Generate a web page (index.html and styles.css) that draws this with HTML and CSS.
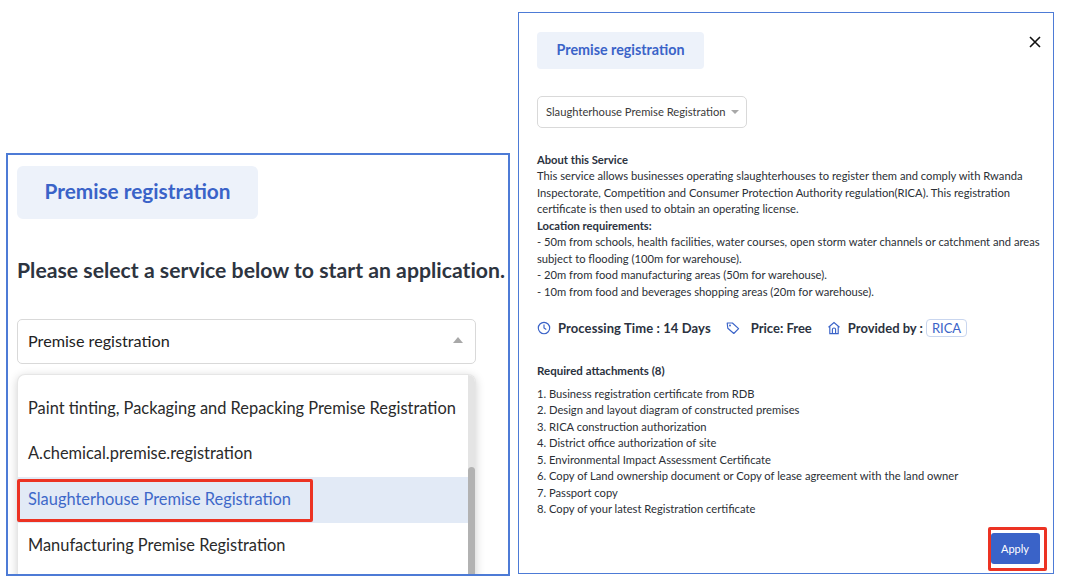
FILE: index.html
```html
<!DOCTYPE html>
<html lang="en">
<head>
<meta charset="utf-8">
<title>Premise registration</title>
<link rel="stylesheet" href="styles.css">
</head>
<body>
<main class="page">
  <section class="panel panel-left">
    <div class="badge badge-lg">Premise registration</div>
    <h2 class="prompt">Please select a service below to start an application.</h2>
    <div class="select select-lg">
      <span>Premise registration</span>
      <span class="caret caret-up"></span>
    </div>
    <div class="dropdown">
      <ul class="options">
        <li class="option">Paint tinting, Packaging and Repacking Premise Registration</li>
        <li class="option">A.chemical.premise.registration</li>
        <li class="option option-active">Slaughterhouse Premise Registration<span class="annot annot-option"></span></li>
        <li class="option">Manufacturing Premise Registration</li>
      </ul>
      <div class="scrollbar"><div class="thumb"></div></div>
    </div>
  </section>

  <section class="panel panel-right">
    <button class="close" aria-label="Close">
      <svg width="12" height="12" viewBox="0 0 12 12"><path d="M1 1l10 10M11 1L1 11" stroke="#111" stroke-width="1.6" fill="none"/></svg>
    </button>
    <div class="badge badge-sm">Premise registration</div>
    <div class="select select-sm">
      <span>Slaughterhouse Premise Registration</span>
      <span class="caret caret-down"></span>
    </div>
    <div class="about">
      <p><b>About this Service</b></p>
      <p>This service allows businesses operating slaughterhouses to register them and comply with Rwanda Inspectorate, Competition and Consumer Protection Authority regulation(RICA). This registration certificate is then used to obtain an operating license.</p>
      <p><b>Location requirements:</b></p>
      <p>- 50m from schools, health facilities, water courses, open storm water channels or catchment and areas subject to flooding (100m for warehouse).</p>
      <p>- 20m from food manufacturing areas (50m for warehouse).</p>
      <p>- 10m from food and beverages shopping areas (20m for warehouse).</p>
    </div>
    <div class="meta">
      <svg class="ico" viewBox="0 0 14 14"><circle cx="7" cy="7" r="5.7"/><path d="M7 3.6V7l2.3 1.4"/></svg>
      <b class="meta-a">Processing Time : 14 Days</b>
      <svg class="ico" viewBox="0 0 14 14"><path d="M1.2 2h5.2l6.2 5.6-4.8 4.9L1.8 7.2z" stroke-linejoin="round"/><circle cx="4" cy="4.4" r=".4"/></svg>
      <b class="meta-b">Price: Free</b>
      <svg class="ico" viewBox="0 0 14 14"><path d="M1.5 6.2L7 1.6l5.5 4.6M2.8 5.4v7.2h8.4V5.4M5.4 12.6V8.6a1.6 1.6 0 0 1 3.2 0v4"/></svg>
      <b class="meta-c">Provided by :</b>
      <span class="tag">RICA</span>
    </div>
    <h3 class="req-title">Required attachments (8)</h3>
    <ol class="req-list">
      <li>1. Business registration certificate from RDB</li>
      <li>2. Design and layout diagram of constructed premises</li>
      <li>3. RICA construction authorization</li>
      <li>4. District office authorization of site</li>
      <li>5. Environmental Impact Assessment Certificate</li>
      <li>6. Copy of Land ownership document or Copy of lease agreement with the land owner</li>
      <li>7. Passport copy</li>
      <li>8. Copy of your latest Registration certificate</li>
    </ol>
    <div class="actions">
      <button class="apply">Apply</button>
      <span class="annot annot-apply"></span>
    </div>
  </section>
</main>
</body>
</html>
```

FILE: styles.css
```css
* { box-sizing: border-box; }
html, body { margin: 0; padding: 0; background: #fff; }
body { width: 1068px; height: 586px; overflow: hidden; font-family: Lato, "Noto Sans", sans-serif; color: #2b3240; }
.page { display: flex; align-items: flex-start; padding: 12px 0 0 6px; gap: 8px; }
.panel { background: #fff; position: relative; }
.panel-left { width: 504px; height: 423px; margin-top: 141px; border: 2px solid #4d7bd6; padding: 11px 0 0 9px; overflow: hidden; }
.panel-right { width: 536px; height: 562px; border: 1px solid #4d7bd6; padding: 19px 12px 0 18px; }
.badge { background: #edf2fa; color: #3a63c8; font-weight: 700; border-radius: 6px; display: flex; align-items: center; justify-content: center; }
.badge-lg { width: 241px; height: 53px; padding-bottom: 5px; font-size: 20.8px; }
.badge-sm { width: 167px; height: 37px; padding-bottom: 3px; font-size: 14.3px; border-radius: 4px; }
.prompt { margin: 38px 0 0; font-size: 21.2px; line-height: 27px; font-weight: 700; white-space: nowrap; color: #2d3440; letter-spacing: 0.02px; }
.select { display: flex; align-items: center; justify-content: space-between; background: #fff; border: 1px solid #d9d9d9; border-radius: 5px; color: #222; white-space: nowrap; }
.select-lg { width: 459px; height: 45px; margin-top: 35px; padding: 0 12px 3px 10px; font-size: 16.2px; }
.select-sm { width: 210px; height: 32px; margin-top: 27px; padding: 0 7px 1px 8px; font-size: 11.2px; color: #3a3a3a; }
.caret { width: 0; height: 0; border-left: 5.5px solid transparent; border-right: 5.5px solid transparent; }
.caret-up { border-bottom: 6px solid #a8a8a8; }
.caret-down { border-left-width: 4px; border-right-width: 4px; border-top: 4px solid #a8a8a8; }
.dropdown { width: 459px; height: 240px; margin-top: 10px; position: relative; background: #fff; border: 1px solid #e6e6e6; border-bottom: 0; border-radius: 8px 8px 0 0; box-shadow: 0 2px 10px rgba(0,0,0,.18); padding-top: 11px; }
.options { list-style: none; margin: 0; padding: 0; width: 451px; }
.option { position: relative; height: 45.6px; display: flex; align-items: center; padding: 0 0 3px 10px; font-size: 16.4px; color: #2a2a2a; white-space: nowrap; }
.option-active { background: #e2eaf6; color: #3e68c9; }
.scrollbar { position: absolute; top: 0; right: 0; bottom: 0; width: 7px; background: #e4e4e4; border-radius: 0 8px 0 0; }
.thumb { position: absolute; top: 92px; left: 0; right: 0; bottom: 0; background: #b2b2b2; border-radius: 4px 4px 0 0; }
.annot { position: absolute; border: 3px solid #ec3323; border-radius: 2px; pointer-events: none; }
.annot-option { left: -1px; top: 2px; width: 296px; height: 43px; }
.annot-apply { left: -3px; top: -6px; width: 59px; height: 44px; }
.close { position: absolute; top: 23px; right: 12px; padding: 0; width: 12px; height: 12px; border: 0; background: none; display: flex; }
.about { margin-top: 24px; font-size: 11.2px; line-height: 16.45px; color: #2b2f36; }
.about p { margin: 0; }
.about b { color: #2b3240; }
.meta { display: flex; align-items: center; margin-top: 16px; height: 24px; font-size: 13px; color: #2b3240; white-space: nowrap; }
.ico { width: 14px; height: 14px; fill: none; stroke: #3a63c8; stroke-width: 1.15; flex: none; }
.meta-a { margin: 0 15px 0 7px; letter-spacing: 0.1px; }
.meta-b { margin: 0 15px 0 11px; }
.meta-c { margin: 0 3px 0 7px; }
.tag { border: 1px solid #c9d6ef; border-radius: 4px; padding: 0 5px; color: #3a63c8; font-size: 13px; line-height: 16px; }
.req-title { margin: 23px 0 0; font-size: 11.5px; line-height: 16px; font-weight: 700; }
.req-list { list-style: none; margin: 7px 0 0; padding: 0; font-size: 11.2px; line-height: 16.4px; color: #2b2f36; }
.actions { position: absolute; top: 520px; left: 472px; }
.apply { display: block; width: 49px; height: 31px; padding: 0 1px 0 0; background: #3a63c8; color: #fff; border: 0; border-radius: 3px; font: 11px Lato, sans-serif; }
```
